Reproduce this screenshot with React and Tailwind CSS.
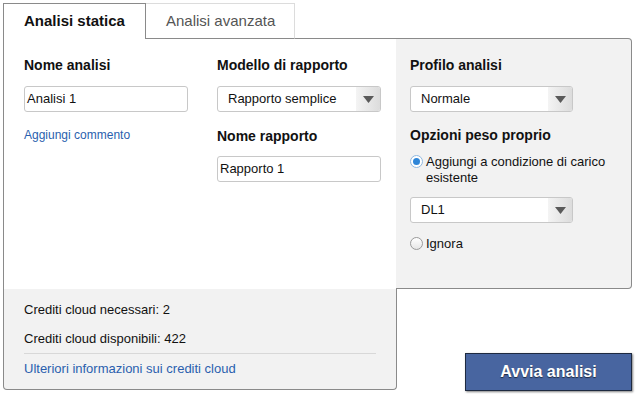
import React from "react";

const font = { fontFamily: '"Liberation Sans", Arial, sans-serif' };

const Arrow = () => (
  <span className="flex h-full w-[24px] items-center justify-center bg-gradient-to-r from-[#f4f4f4] to-[#dcdcdc]">
    <svg width="11" height="7" viewBox="0 0 11 7">
      <polygon points="0,0 11,0 5.5,7" fill="#5a5a5a" />
    </svg>
  </span>
);

const Select = ({ value, width = "w-[164px]" }) => (
  <div
    className={`flex h-[26px] ${width} items-center justify-between overflow-hidden rounded-[3px] border border-[#c8c8c8] bg-white`}
  >
    <span className="pl-[10px] text-[13px] text-[#111]">{value}</span>
    <Arrow />
  </div>
);

const Input = ({ value }) => (
  <div className="flex h-[26px] w-[164px] items-center rounded-[3px] border border-[#c8c8c8] bg-white pl-[2px] text-[13px] text-[#111]">
    {value}
  </div>
);

const Label = ({ children, className = "" }) => (
  <div className={`text-[14px] font-bold leading-[16px] text-[#111] ${className}`}>
    {children}
  </div>
);

const Radio = ({ checked }) => (
  <span
    className={`mt-[1px] flex h-[13px] w-[13px] shrink-0 items-center justify-center rounded-full border ${
      checked ? "border-[#8fb8e0] bg-white" : "border-[#9a9a9a] bg-gradient-to-b from-white to-[#e6e6e6]"
    }`}
  >
    {checked && <span className="h-[7px] w-[7px] rounded-full bg-[#2f86d8]" />}
  </span>
);

export default function App() {
  return (
    <div className="h-[394px] w-[637px] bg-white pl-[3px] pt-[3px]" style={font}>
      <div className="flex">
        {/* left column: tabs + white content */}
        <div className="flex w-[393px] flex-col">
          <div className="flex h-[36px]">
            <div className="flex w-[143px] items-center border-x border-t border-[#8a8a8a] bg-white pl-[20px] text-[15px] font-bold text-[#111]">
              Analisi statica
            </div>
            <div className="flex w-[149px] items-center border-b border-r border-t border-b-[#8a8a8a] border-r-[#dcdcdc] border-t-[#dcdcdc] bg-white pl-[20px] text-[15px] text-[#555]">
              Analisi avanzata
            </div>
            <div className="flex-1 border-b border-[#8a8a8a]" />
          </div>
          <div className="flex h-[250px] gap-[29px] border-l border-[#8a8a8a] bg-white pl-[20px] pt-[18px]">
            <div className="flex w-[164px] flex-col">
              <Label>Nome analisi</Label>
              <div className="mt-[13px]">
                <Input value="Analisi 1" />
              </div>
              <a className="mt-[14px] text-[12px] text-[#2a5fae]">Aggiungi commento</a>
            </div>
            <div className="flex w-[164px] flex-col">
              <Label>Modello di rapporto</Label>
              <div className="mt-[13px]">
                <Select value="Rapporto semplice" />
              </div>
              <Label className="mt-[16px]">Nome rapporto</Label>
              <div className="mt-[12px]">
                <Input value="Rapporto 1" />
              </div>
            </div>
          </div>
        </div>

        {/* right column */}
        <div className="mt-[35px] flex h-[251px] w-[236px] flex-col rounded-r-[4px] border-y border-r border-[#8a8a8a] bg-[#f2f2f2] pl-[14px] pt-[18px]">
          <Label>Profilo analisi</Label>
          <div className="mt-[13px]">
            <Select value="Normale" width="w-[163px]" />
          </div>
          <Label className="mt-[15px]">Opzioni peso proprio</Label>
          <div className="mt-[11px] flex gap-[3px] text-[13px] leading-[16px] text-[#111]">
            <Radio checked />
            <span>
              Aggiungi a condizione di carico
              <br />
              esistente
            </span>
          </div>
          <div className="mt-[11px]">
            <Select value="DL1" width="w-[163px]" />
          </div>
          <div className="mt-[13px] flex gap-[3px] text-[13px] leading-[16px] text-[#111]">
            <Radio />
            <span>Ignora</span>
          </div>
        </div>
      </div>

      <div className="flex">
        {/* bottom credits */}
        <div className="flex h-[101px] w-[394px] flex-col rounded-b-[4px] border-x border-b border-[#8a8a8a] bg-[#f2f2f2] px-[20px] pt-[13px] text-[13px] text-[#111]">
          <div className="leading-[16px]">Crediti cloud necessari: 2</div>
          <div className="mt-[13px] leading-[16px]">Crediti cloud disponibili: 422</div>
          <div className="mt-[6px] border-t border-[#d8d8d8]" />
          <a className="mt-[7px] leading-[16px] text-[#2a5fae]">
            Ulteriori informazioni sui crediti cloud
          </a>
        </div>
        <div className="flex flex-1 items-end justify-end pr-[5px]">
          <button className="mb-[-1px] flex h-[38px] w-[167px] items-center justify-center border border-[#1e2a40] bg-[#4865a0] text-[16px] font-bold text-white [text-shadow:0_1px_1px_rgba(0,0,0,0.6)] shadow-[1px_1px_2px_rgba(0,0,0,0.5)]">
            Avvia analisi
          </button>
        </div>
      </div>
    </div>
  );
}
